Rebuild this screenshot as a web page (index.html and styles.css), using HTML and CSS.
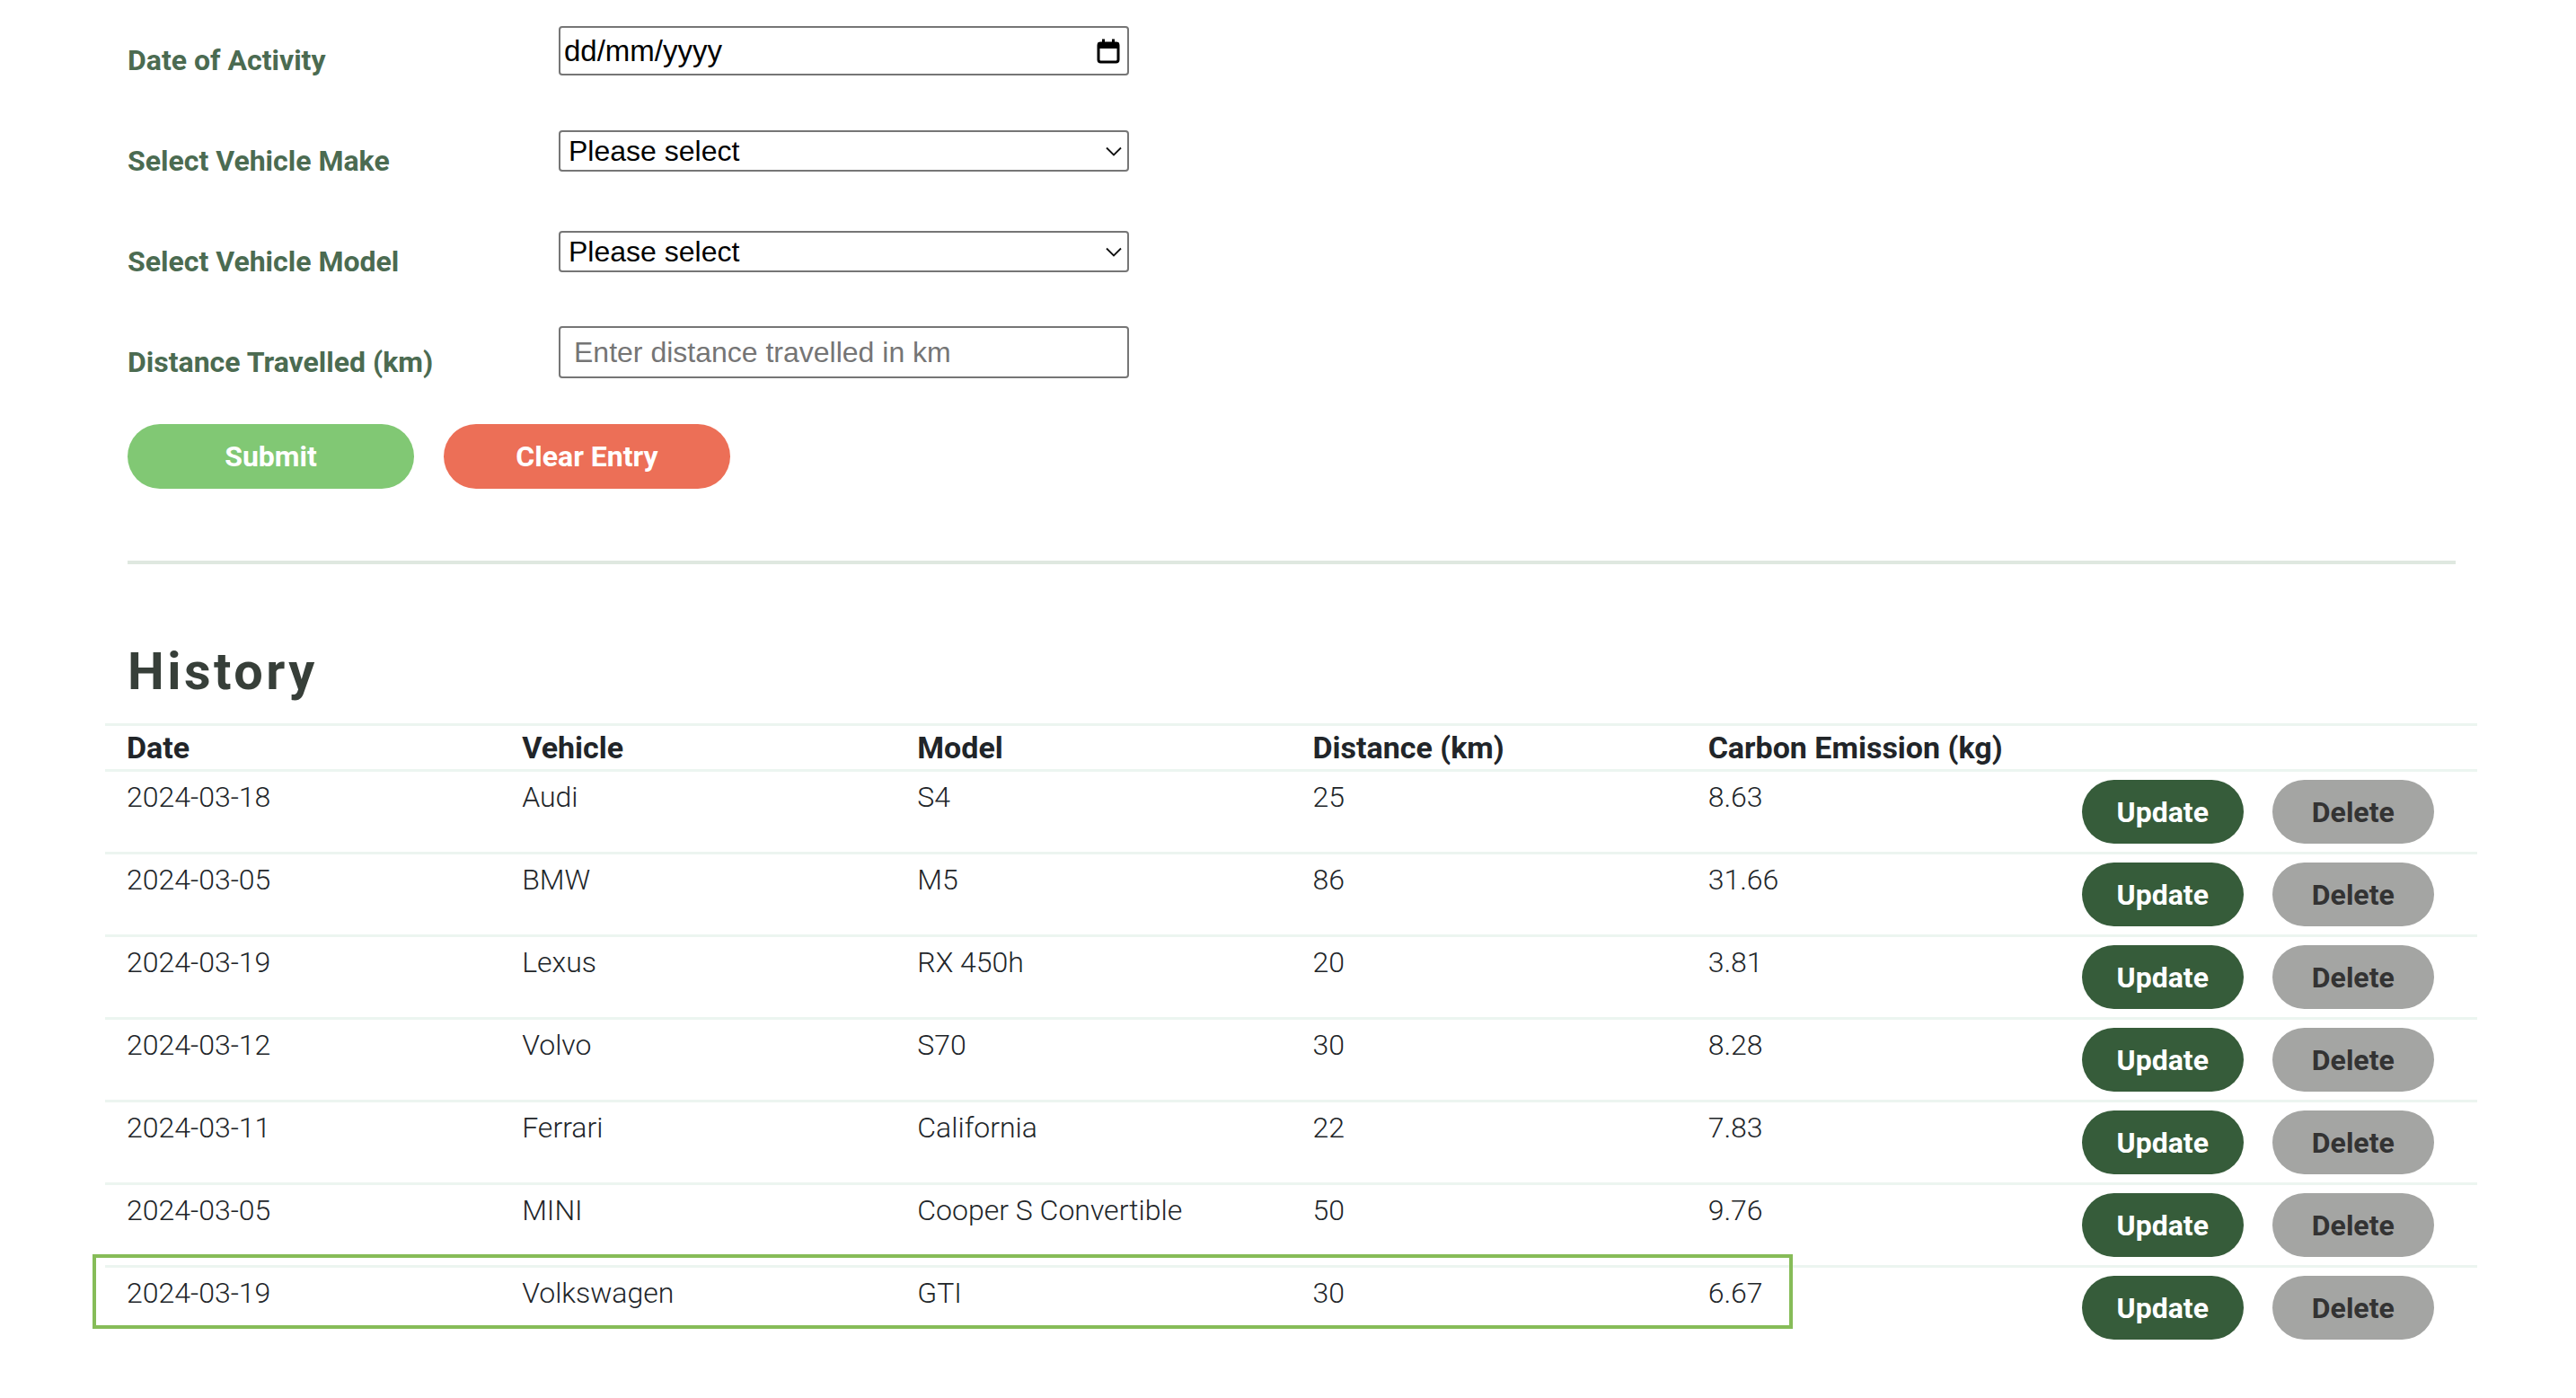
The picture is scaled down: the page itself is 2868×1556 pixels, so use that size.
FILE: index.html
```html
<!DOCTYPE html>
<html lang="en">
<head>
<meta charset="utf-8">
<title>Carbon Tracker - History</title>
<link rel="stylesheet" href="styles.css">
</head>
<body>
<div class="page">
  <form class="entry-form">
    <div class="form-row">
      <label class="form-label" for="date">Date of Activity</label>
      <div class="control date-control">
        <span class="date-text">dd/mm/yyyy</span>
        <svg class="cal-icon" width="26" height="28" viewBox="0 0 26 28">
          <rect x="2" y="5" width="22" height="21" rx="2.5" fill="none" stroke="#000" stroke-width="3"/>
          <rect x="1" y="4" width="24" height="7" rx="2" fill="#000"/>
          <rect x="6" y="0.5" width="3" height="6" fill="#000"/>
          <rect x="17" y="0.5" width="3" height="6" fill="#000"/>
        </svg>
      </div>
    </div>
    <div class="form-row">
      <label class="form-label" for="make">Select Vehicle Make</label>
      <div class="control select-control">
        <select id="make" class="select"><option>Please select</option></select>
        <svg class="chev" width="18" height="11" viewBox="0 0 18 11"><path d="M1 1.5 L9 9.5 L17 1.5" fill="none" stroke="#111" stroke-width="1.8"/></svg>
      </div>
    </div>
    <div class="form-row">
      <label class="form-label" for="model">Select Vehicle Model</label>
      <div class="control select-control">
        <select id="model" class="select"><option>Please select</option></select>
        <svg class="chev" width="18" height="11" viewBox="0 0 18 11"><path d="M1 1.5 L9 9.5 L17 1.5" fill="none" stroke="#111" stroke-width="1.8"/></svg>
      </div>
    </div>
    <div class="form-row">
      <label class="form-label" for="dist">Distance Travelled (km)</label>
      <input id="dist" class="control text-control" type="text" placeholder="Enter distance travelled in km">
    </div>
    <div class="form-actions">
      <button type="button" class="pill btn-submit">Submit</button>
      <button type="button" class="pill btn-clear">Clear Entry</button>
    </div>
  </form>

  <hr class="divider">

  <h2 class="history-title">History</h2>

  <table class="history-table">
    <thead>
      <tr><th>Date</th><th>Vehicle</th><th>Model</th><th>Distance (km)</th><th>Carbon Emission (kg)</th><th></th></tr>
    </thead>
    <tbody>
      <tr><td>2024-03-18</td><td>Audi</td><td>S4</td><td>25</td><td>8.63</td><td class="actions"><button class="pill btn-update">Update</button><button class="pill btn-delete">Delete</button></td></tr>
      <tr><td>2024-03-05</td><td>BMW</td><td>M5</td><td>86</td><td>31.66</td><td class="actions"><button class="pill btn-update">Update</button><button class="pill btn-delete">Delete</button></td></tr>
      <tr><td>2024-03-19</td><td>Lexus</td><td>RX 450h</td><td>20</td><td>3.81</td><td class="actions"><button class="pill btn-update">Update</button><button class="pill btn-delete">Delete</button></td></tr>
      <tr><td>2024-03-12</td><td>Volvo</td><td>S70</td><td>30</td><td>8.28</td><td class="actions"><button class="pill btn-update">Update</button><button class="pill btn-delete">Delete</button></td></tr>
      <tr><td>2024-03-11</td><td>Ferrari</td><td>California</td><td>22</td><td>7.83</td><td class="actions"><button class="pill btn-update">Update</button><button class="pill btn-delete">Delete</button></td></tr>
      <tr><td>2024-03-05</td><td>MINI</td><td>Cooper S Convertible</td><td>50</td><td>9.76</td><td class="actions"><button class="pill btn-update">Update</button><button class="pill btn-delete">Delete</button></td></tr>
      <tr><td>2024-03-19</td><td>Volkswagen</td><td>GTI</td><td>30</td><td>6.67</td><td class="actions"><button class="pill btn-update">Update</button><button class="pill btn-delete">Delete</button></td></tr>
    </tbody>
  </table>
  <div class="row-highlight"></div>
</div>
</body>
</html>
```

FILE: styles.css
```css
* { box-sizing: border-box; }

html, body {
  margin: 0;
  padding: 0;
  background: #ffffff;
}

body {
  font-family: Roboto, "Liberation Sans", Arial, sans-serif;
  color: #212529;
}

.page {
  position: relative;
  margin-left: 142px;
  width: 2592px;
}

/* ---------- form ---------- */
.entry-form {
  display: flex;
  flex-direction: column;
}

.form-row {
  display: flex;
  align-items: center;
  height: 112px;
}

.form-label {
  align-self: flex-start;
  margin-top: 43px;
  width: 480px;
  flex: none;
  font-size: 32px;
  line-height: 48px;
  font-weight: 700;
  color: #4b6b51;
}

.control {
  width: 635px;
  border: 2px solid #767676;
  border-radius: 4px;
  background: #fff;
  font-family: "Liberation Sans", Arial, sans-serif;
  font-size: 32px;
  color: #000;
}

.date-control {
  height: 55px;
  display: flex;
  align-items: center;
  justify-content: space-between;
  padding: 0 8px 0 4px;
}

.date-text {
  font-size: 33px;
  line-height: 1;
}

.cal-icon {
  display: block;
  margin-top: 1px;
}

.select-control {
  height: 46px;
  display: flex;
  align-items: center;
  padding-right: 6px;
}

.select {
  flex: 1;
  appearance: none;
  -webkit-appearance: none;
  border: none;
  outline: none;
  background: transparent;
  font-family: "Liberation Sans", Arial, sans-serif;
  font-size: 32px;
  color: #000;
  padding: 0 0 0 9px;
  height: 100%;
}

.chev {
  display: block;
  flex: none;
}

.text-control {
  height: 58px;
  padding: 0 15px;
  outline: none;
}

.text-control::placeholder {
  color: #757575;
}

.form-actions {
  display: flex;
  gap: 33px;
  margin-top: 24px;
}

.pill {
  border: none;
  border-radius: 999px;
  font-family: Roboto, "Liberation Sans", Arial, sans-serif;
  font-weight: 700;
  font-size: 32px;
  padding: 0;
  cursor: pointer;
}

.btn-submit,
.btn-clear {
  width: 319px;
  height: 72px;
  color: #fff;
}

.btn-submit { background: #81c874; }
.btn-clear { background: #ec6f57; }

.divider {
  margin: 80px 0 0;
  border: none;
  height: 4px;
  background: #dfe8e0;
}

.history-title {
  margin: 85px 0 0;
  font-size: 57.6px;
  line-height: 1.2;
  font-weight: 700;
  letter-spacing: 3.5px;
  color: #373f39;
}

/* ---------- table ---------- */
.history-table {
  margin: 23px 0 0 -25px;
  width: 2641px;
  table-layout: fixed;
  border-collapse: separate;
  border-spacing: 0;
  font-size: 32px;
}

.history-table th,
.history-table td {
  border-top: 3px solid #ecf5f0;
  text-align: left;
  vertical-align: top;
  line-height: 48px;
}

.history-table th {
  padding: 0 24px;
  font-size: 34px;
  font-weight: 700;
  color: #212529;
}

.history-table td {
  padding: 4px 24px 0;
  font-weight: 300;
  color: #212529;
}

.history-table td.actions {
  padding: 9px 0;
  white-space: nowrap;
}

.actions {
  font-size: 0;
}

.btn-update,
.btn-delete {
  width: 180px;
  height: 71px;
  vertical-align: top;
}

.btn-update {
  background: #365c3a;
  color: #fff;
}

.btn-delete {
  margin-left: 32px;
  background: #a4a5a3;
  color: #333333;
}

.row-highlight {
  position: absolute;
  left: -39px;
  top: 1396px;
  width: 1893px;
  height: 83px;
  border: 4px solid #86bc58;
  pointer-events: none;
}
```
